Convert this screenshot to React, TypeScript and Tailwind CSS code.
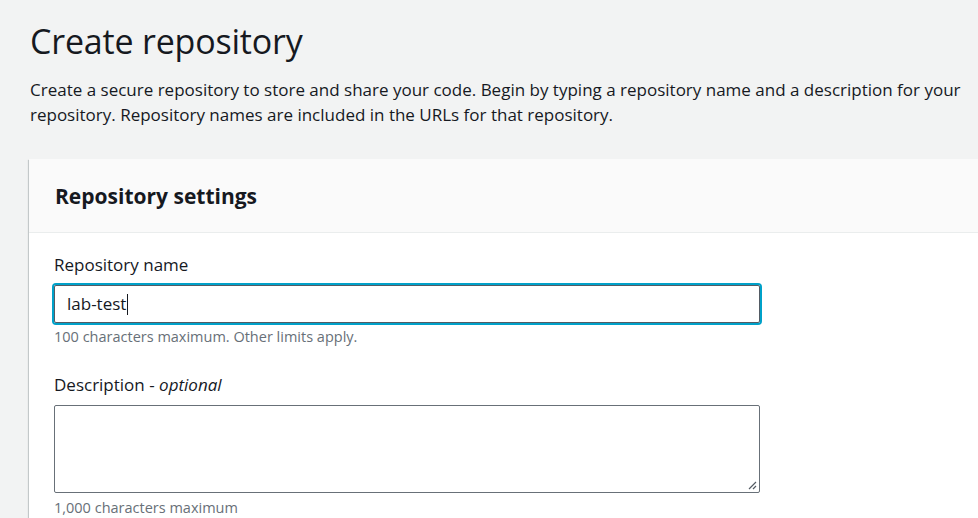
import React from 'react'

export default function App() {
  return (
    <div
      className="min-h-[518px] w-[978px] overflow-hidden bg-[#f2f3f3] text-[#16191f]"
      style={{ fontFamily: '"Open Sans", "Noto Sans", Arial, sans-serif' }}
    >
      <div className="pl-[30px] pt-[19px]">
        <h1 className="text-[34px] leading-[44px] font-normal tracking-[-0.2px]">Create repository</h1>
        <p className="mt-[14px] text-[17px] leading-[25px] pr-[10px]">
          Create a secure repository to store and share your code. Begin by typing a repository name and a description for your repository. Repository names are included in the URLs for that repository.
        </p>
      </div>

      <section className="ml-[29px] mt-[32px] bg-white shadow-[0_1px_1px_0_rgba(0,28,36,0.3),1px_1px_1px_0_rgba(0,28,36,0.15),-1px_1px_1px_0_rgba(0,28,36,0.15)]">
        <div className="h-[74px] flex items-center px-[26px] bg-[#fafafa] border-b border-[#eaeded]">
          <h2 className="text-[21px] font-bold leading-[28px]">Repository settings</h2>
        </div>
        <div className="px-[25px] pt-[21px] pb-[10px]">
          <label className="block text-[17px] leading-[22px]">Repository name</label>
          <div className="mt-[9px] w-[706px] h-[38px] rounded-[2px] border border-[#545b64] shadow-[0_0_0_2px_#00a1c9] flex items-center px-[12px] text-[17px]">
            <span>lab-test</span>
            <span className="ml-[1px] w-[1px] h-[21px] bg-[#16191f]" />
          </div>
          <p className="mt-[4px] text-[14.5px] leading-[20px] text-[#687078]">100 characters maximum. Other limits apply.</p>

          <label className="mt-[27px] block text-[17px] leading-[22px]">
            Description - <i>optional</i>
          </label>
          <div className="relative mt-[9px] w-[706px] h-[88px] rounded-[2px] border border-[#687078] bg-white">
            <svg className="absolute right-[2px] bottom-[2px]" width="10" height="10" viewBox="0 0 10 10">
              <path d="M9 2 L2 9 M9 6 L6 9" stroke="#545b64" strokeWidth="1.2" fill="none" />
            </svg>
          </div>
          <p className="mt-[5px] text-[14.5px] leading-[20px] text-[#687078]">1,000 characters maximum</p>
        </div>
      </section>
    </div>
  )
}
